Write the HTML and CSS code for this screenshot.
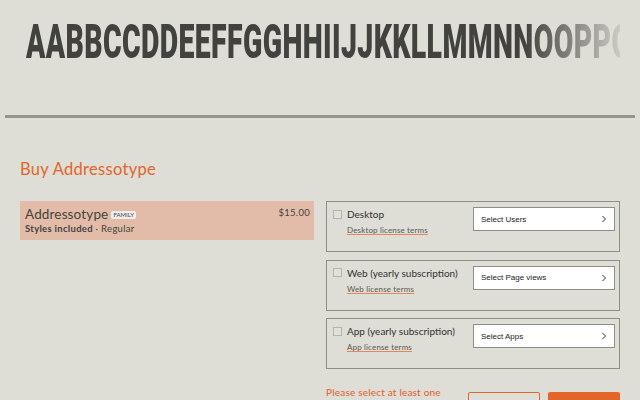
FILE: index.html
```html
<!DOCTYPE html>
<html lang="en">
    <head>
        <meta charset="utf-8">
        <title>Buy Addressotype</title>
        <meta name="viewport" content="width=device-width, initial-scale=1">
        <link rel="stylesheet" href="styles.css">
    </head>
    <body>
        <!-- Type specimen -->
        <header class="specimen">
            <div class="specimen-fade">
                <div class="specimen-text">AABBCCDDEEFFGGHHIIJJKKLLMMNNOOPPQ</div>
            </div>
        </header>
        <div class="rule"></div>

        <main class="buy">
            <h2 class="buy-title">Buy Addressotype</h2>
            <div class="buy-grid">
                <section class="cart">
                    <div class="cart-main">
                        <div class="cart-name">Addressotype <span class="tag">FAMILY</span></div>
                        <div class="cart-styles"><b>Styles included</b> · Regular</div>
                    </div>
                    <div class="cart-price">$15.00</div>
                </section>

                <section class="licenses">
                    <div class="license">
                        <div class="license-info">
                            <div class="license-name"><span class="check"></span>Desktop</div>
                            <a class="terms" href="#">Desktop license terms</a>
                        </div>
                        <button class="select">Select Users
                            <svg class="chevron" viewBox="0 0 6 8"><path d="M1.5 1l3 3-3 3"/></svg>
                        </button>
                    </div>
                    <div class="license">
                        <div class="license-info">
                            <div class="license-name"><span class="check"></span>Web (yearly subscription)</div>
                            <a class="terms" href="#">Web license terms</a>
                        </div>
                        <button class="select">Select Page views
                            <svg class="chevron" viewBox="0 0 6 8"><path d="M1.5 1l3 3-3 3"/></svg>
                        </button>
                    </div>
                    <div class="license">
                        <div class="license-info">
                            <div class="license-name"><span class="check"></span>App (yearly subscription)</div>
                            <a class="terms" href="#">App license terms</a>
                        </div>
                        <button class="select">Select Apps
                            <svg class="chevron" viewBox="0 0 6 8"><path d="M1.5 1l3 3-3 3"/></svg>
                        </button>
                    </div>
                    <div class="actions">
                        <div class="notice">Please select at least one</div>
                        <div class="btn btn-outline"></div>
                        <div class="btn btn-solid"></div>
                    </div>
                </section>
            </div>
        </main>
    </body>
</html>
```

FILE: styles.css
```css
/* Reset */
*,
*::after,
*::before {
    margin: 0;
    padding: 0;
    box-sizing: border-box;
}

/* Base */
html, body {
    height: 400px;
    overflow: hidden;
}
body {
    font-family: "Lato", sans-serif;
    background: #deddd6;
    color: #44433f;
}

/* Specimen */
.specimen {
    height: 115px;
    padding: 24px 20px 0 26px;
}
.specimen-fade {
    height: 36px;
    overflow: hidden;
    -webkit-mask-image: linear-gradient(to right, #000 84%, rgba(0, 0, 0, 0.12) 100%);
    mask-image: linear-gradient(to right, #000 84%, rgba(0, 0, 0, 0.12) 100%);
}
.specimen-text {
    font-family: "Roboto", sans-serif;
    font-weight: 900;
    font-size: 49px;
    line-height: 35px;
    letter-spacing: 0.65px;
    white-space: nowrap;
    color: #42423e;
    transform: scaleX(0.58);
    transform-origin: left top;
}

.rule {
    height: 3px;
    margin: 0 5px;
    background: #97938a;
}

/* Buy section */
.buy {
    padding: 41px 20px 0 20px;
}
.buy-title {
    font-size: 16.5px;
    font-weight: 400;
    letter-spacing: 0.3px;
    line-height: 20px;
    color: #e2662a;
}
.buy-grid {
    display: grid;
    grid-template-columns: 294px 294px;
    column-gap: 12px;
    margin-top: 22px;
    align-items: start;
}

/* Cart line */
.cart {
    display: flex;
    justify-content: space-between;
    height: 39px;
    padding: 6px 4px 6px 5px;
    background: #e2bca8;
}
.cart-name {
    display: flex;
    align-items: center;
    gap: 3px;
    font-size: 13.5px;
    line-height: 15px;
    letter-spacing: 0.15px;
}
.tag {
    padding: 1px 2px;
    font-size: 6px;
    line-height: 6px;
    letter-spacing: 0;
    background: #f1efeb;
    border-radius: 2px;
}
.cart-styles {
    margin-top: 1px;
    font-size: 9.5px;
    line-height: 12px;
    letter-spacing: 0.3px;
}
.cart-price {
    font-size: 9.5px;
    line-height: 12px;
    letter-spacing: 0.3px;
}

/* License boxes */
.licenses {
    display: flex;
    flex-direction: column;
    gap: 7.5px;
}
.license {
    display: flex;
    justify-content: space-between;
    height: 51px;
    padding: 5px 4px 5px 6px;
    border: 1px solid #8f8e86;
}
.license-name {
    display: flex;
    align-items: center;
    gap: 5px;
    font-size: 10px;
    line-height: 14px;
    color: #33322f;
}
.check {
    width: 9px;
    height: 9px;
    border: 1px solid #b5b4ac;
    background: #e2e1da;
}
.terms {
    display: block;
    width: fit-content;
    margin: 4px 0 0 14px;
    font-size: 8px;
    line-height: 11px;
    letter-spacing: 0.15px;
    color: #5a5953;
    text-decoration: underline;
    text-decoration-color: #e9855a;
    text-underline-offset: 1px;
}
.select {
    display: flex;
    justify-content: space-between;
    align-items: center;
    width: 142px;
    height: 24px;
    padding: 0 7px;
    font-family: "Liberation Sans", sans-serif;
    font-size: 8px;
    color: #222;
    background: #fff;
    border: 1px solid #8f8e86;
}
.chevron {
    width: 6px;
    height: 8px;
    fill: none;
    stroke: #333;
    stroke-width: 1;
}

/* Bottom row */
.actions {
    display: flex;
    gap: 8px;
    margin-top: 9px;
}
.notice {
    width: 134px;
    font-size: 10px;
    font-weight: 400;
    line-height: 12px;
    letter-spacing: 0.2px;
    color: #e0602a;
}
.btn {
    width: 72px;
    height: 30px;
    margin-top: 6px;
    border-radius: 2px;
}
.btn-outline {
    border: 1px solid #e2662a;
}
.btn-solid {
    background: #e2662a;
}
```
